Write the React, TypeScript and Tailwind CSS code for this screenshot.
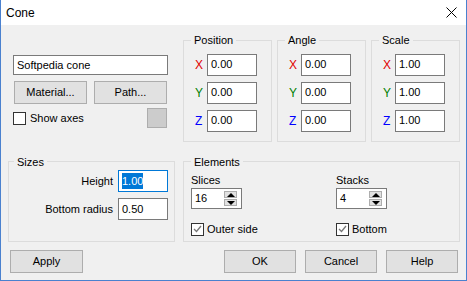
import React from "react";

const font = { fontFamily: '"Liberation Sans", Arial, sans-serif' };

function Btn({ label, w = "w-[73px]" }: { label: string; w?: string }) {
  return (
    <div className={`${w} h-[23px] flex items-center justify-center bg-[#e1e1e1] border border-[#adadad] text-black`}>
      {label}
    </div>
  );
}

function Field({ value, w = "w-[50px]", h = "h-[22px]" }: { value: string; w?: string; h?: string }) {
  return (
    <div className={`${w} ${h} flex items-center pl-[3px] bg-white border border-[#7a7a7a]`}>{value}</div>
  );
}

function Check({ checked }: { checked?: boolean }) {
  return (
    <div className="w-[13px] h-[13px] bg-white border border-[#333] flex items-center justify-center">
      {checked && (
        <svg width="9" height="8" viewBox="0 0 9 8">
          <polyline points="1,4 3.5,6.5 8,1" fill="none" stroke="#777" strokeWidth="1.3" />
        </svg>
      )}
    </div>
  );
}

function Spin({ value }: { value: string }) {
  return (
    <div className="w-[51px] h-[21px] flex items-center justify-between pl-[3px] pr-[4px] bg-white border border-[#7a7a7a]">
      <span>{value}</span>
      <div className="flex flex-col gap-px">
        <div className="w-[13px] h-[7px] bg-[#e1e1e1] border border-[#adadad] flex items-center justify-center">
          <div className="w-0 h-0 border-l-[4px] border-r-[4px] border-b-[4px] border-l-transparent border-r-transparent border-b-black" />
        </div>
        <div className="w-[13px] h-[7px] bg-[#e1e1e1] border border-[#adadad] flex items-center justify-center">
          <div className="w-0 h-0 border-l-[4px] border-r-[4px] border-t-[4px] border-l-transparent border-r-transparent border-t-black" />
        </div>
      </div>
    </div>
  );
}

function XYZGroup({ title, values }: { title: string; values: string[] }) {
  const axes = [
    { a: "X", c: "text-[#e00000]" },
    { a: "Y", c: "text-[#008000]" },
    { a: "Z", c: "text-[#0000ff]" },
  ];
  return (
    <fieldset className="w-[89px] border border-[#dcdcdc] p-0">
      <legend className="ml-[7px] px-[3px]">{title}</legend>
      <div className="flex flex-col gap-[6px] pl-[11px] pt-[5px] pb-[9px]">
        {axes.map((x, i) => (
          <div key={x.a} className="flex items-center">
            <span className={`w-[12px] text-[12px] ${x.c}`}>{x.a}</span>
            <Field value={values[i]} />
          </div>
        ))}
      </div>
    </fieldset>
  );
}

export default function App() {
  return (
    <div
      className="w-[467px] h-[281px] flex flex-col bg-[#f0f0f0] border-x border-b border-[#4a81cf] text-[11px] text-black overflow-hidden"
      style={font}
    >
      <div className="h-[25px] shrink-0 bg-white flex items-center justify-between pl-[5px] pr-[9px] text-[12px]">
        <span>Cone</span>
        <svg width="11" height="11" viewBox="0 0 11 11">
          <path d="M0.5 0.5 L10.5 10.5 M10.5 0.5 L0.5 10.5" stroke="#000" strokeWidth="1" />
        </svg>
      </div>

      <div className="flex-1">
        <div className="flex mt-[7px] pl-[12px]">
          <div className="w-[155px] pt-[23px] flex flex-col">
            <div className="h-[20px] flex items-center pl-[3px] bg-white border border-[#7a7a7a]">Softpedia cone</div>
            <div className="flex gap-[7px] mt-[6px] pl-[1px]">
              <Btn label="Material..." />
              <Btn label="Path..." />
            </div>
            <div className="flex items-center justify-between mt-[4px] pr-[1px]">
              <div className="flex items-center gap-[4px]">
                <Check />
                <span>Show axes</span>
              </div>
              <div className="w-[20px] h-[20px] bg-[#cccccc] border border-[#adadad]" />
            </div>
          </div>
          <div className="flex gap-[5px] ml-[15px]">
            <XYZGroup title="Position" values={["0.00", "0.00", "0.00"]} />
            <XYZGroup title="Angle" values={["0.00", "0.00", "0.00"]} />
            <XYZGroup title="Scale" values={["1.00", "1.00", "1.00"]} />
          </div>
        </div>

        <div className="flex gap-[8px] mt-[12px] pl-[7px]">
          <fieldset className="w-[167px] h-[88px] border border-[#dcdcdc] p-0">
            <legend className="ml-[5px] px-[3px]">Sizes</legend>
            <div className="flex flex-col gap-[6px] pr-[6px]">
              <div className="flex items-center justify-end gap-[5px]">
                <span>Height</span>
                <div className="w-[50px] h-[22px] flex items-center pl-[3px] bg-white border border-[#0078d7]">
                  <span className="bg-[#0078d7] text-white">1.00</span>
                </div>
              </div>
              <div className="flex items-center justify-end gap-[5px]">
                <span>Bottom radius</span>
                <Field value="0.50" />
              </div>
            </div>
          </fieldset>
          <fieldset className="w-[277px] h-[88px] border border-[#dcdcdc] p-0">
            <legend className="ml-[7px] px-[3px]">Elements</legend>
            <div className="flex pl-[7px] pt-[3px]">
              <div className="w-[145px] flex flex-col">
                <span className="leading-[14px]">Slices</span>
                <div className="mt-[1px]">
                  <Spin value="16" />
                </div>
                <div className="flex items-center gap-[3px] mt-[12px]">
                  <Check checked />
                  <span>Outer side</span>
                </div>
              </div>
              <div className="flex flex-col">
                <span className="leading-[14px]">Stacks</span>
                <div className="mt-[1px]">
                  <Spin value="4" />
                </div>
                <div className="flex items-center gap-[3px] mt-[12px]">
                  <Check checked />
                  <span>Bottom</span>
                </div>
              </div>
            </div>
          </fieldset>
        </div>

        <div className="flex items-center mt-[8px] pl-[9px] pr-[8px]">
          <Btn label="Apply" />
          <div className="ml-auto flex gap-[9px]">
            <Btn label="OK" w="w-[72px]" />
            <Btn label="Cancel" w="w-[72px]" />
            <Btn label="Help" w="w-[72px]" />
          </div>
        </div>
      </div>
    </div>
  );
}
